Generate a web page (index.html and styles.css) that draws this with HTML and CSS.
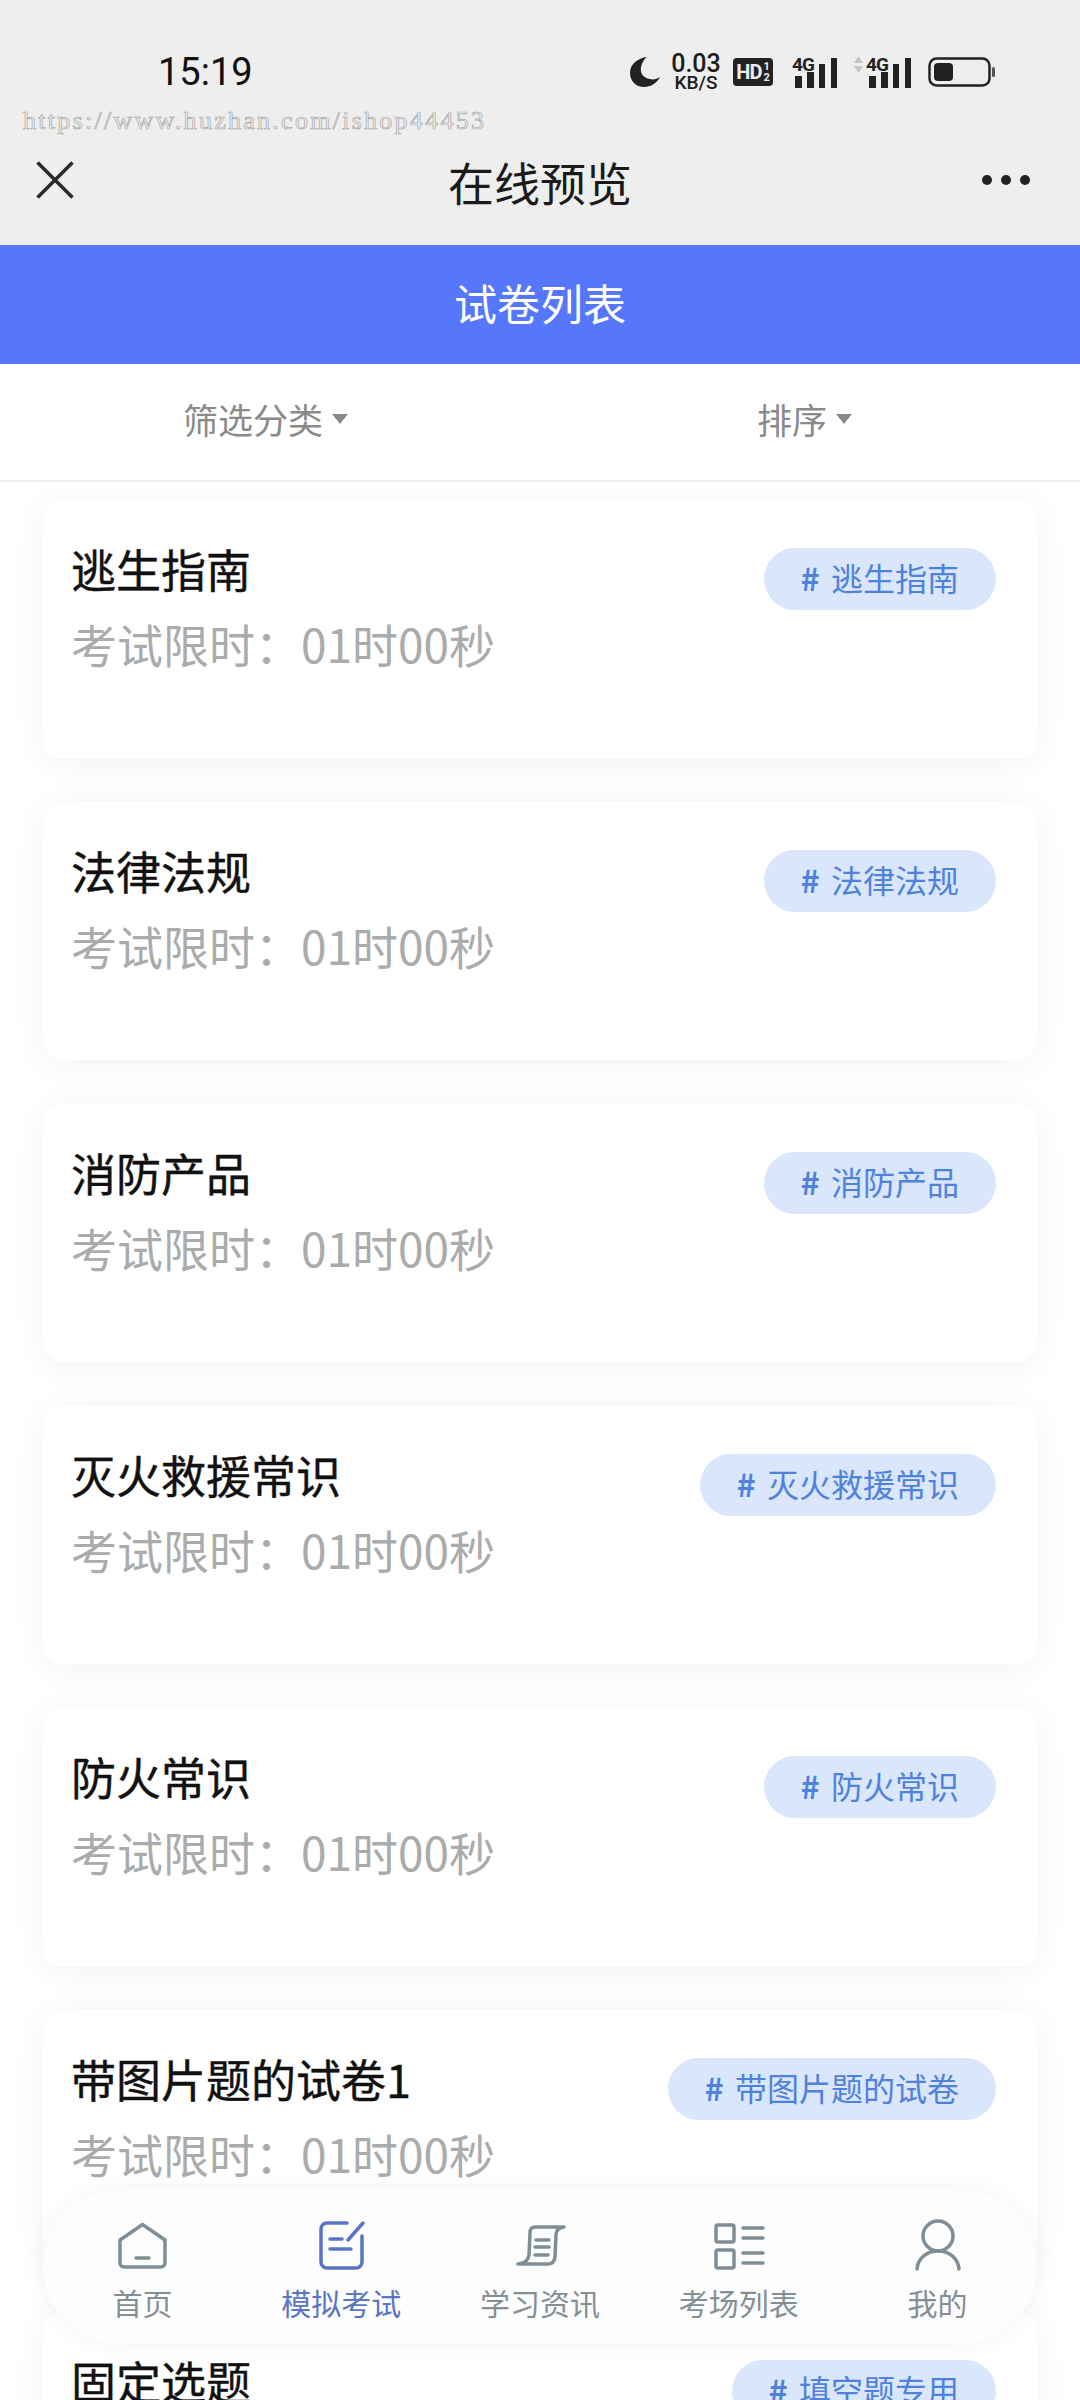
FILE: index.html
```html
<!DOCTYPE html>
<html lang="zh-CN">
<head>
<meta charset="utf-8">
<title>试卷列表</title>
<link rel="stylesheet" href="styles.css">
</head>
<body>
<div class="page">
  <header class="top">
    <div class="status">
      <span class="time">15:19</span>
      <div class="status-icons">
        <svg class="ico-moon" width="30" height="30" viewBox="0 0 30 30"><path d="M17 0C8 1 0 7 0 16c0 8 6 14 14 14 7 0 13-4 16-10-3 2-7 3-10 2C13 21 10 16 11 10c1-4 3-8 6-10Z" fill="#222"/></svg>
        <div class="speed"><span class="speed-num">0.03</span><span class="speed-unit">KB/S</span></div>
        <div class="hd"><span class="hd-main">HD</span><span class="hd-frac"><i>1</i><i>2</i></span></div>
        <svg class="ico-signal" width="45" height="32" viewBox="0 0 45 32"><text x="0" y="15" class="sig-text">4G</text><rect x="3" y="20" width="7" height="12" fill="#222"/><rect x="15" y="16" width="7" height="16" fill="#222"/><rect x="27" y="8" width="6" height="24" fill="#222"/><rect x="39" y="2" width="6" height="30" fill="#222"/></svg>
        <svg class="ico-arrows" width="9" height="18" viewBox="0 0 9 18"><path d="M4.500 0 9 7H0Z M0 10h9l-4.500 7Z" fill="#c4c4c4"/></svg>
        <svg class="ico-signal2" width="45" height="32" viewBox="0 0 45 32"><text x="0" y="15" class="sig-text">4G</text><rect x="3" y="20" width="7" height="12" fill="#222"/><rect x="15" y="16" width="7" height="16" fill="#222"/><rect x="27" y="8" width="6" height="24" fill="#222"/><rect x="39" y="2" width="6" height="30" fill="#222"/></svg>
        <svg class="ico-batt" width="67" height="30" viewBox="0 0 67 30"><rect x="1.500" y="1.500" width="60" height="27" rx="7" fill="none" stroke="#222" stroke-width="2.500"/><rect x="6" y="6" width="19" height="18" rx="4" fill="#222"/><rect x="64" y="10" width="3" height="10" rx="1.500" fill="#555"/></svg>
      </div>
    </div>
    <div class="watermark">https://www.huzhan.com/ishop44453</div>
    <div class="wxbar">
      <svg class="ico-close" width="38" height="38" viewBox="0 0 38 38"><path d="M1.500 1.500 36.500 36.500M36.500 1.500 1.500 36.500" stroke="#2a2a2a" stroke-width="3.500" fill="none"/></svg>
      <span class="wx-title">在线预览</span>
      <span class="dots"><i></i><i></i><i></i></span>
    </div>
  </header>

  <div class="bluebar">试卷列表</div>

  <div class="filters">
    <div class="filter"><span>筛选分类</span><i class="caret"></i></div>
    <div class="filter"><span>排序</span><i class="caret"></i></div>
  </div>

  <main class="list">
    <article class="card"><div class="card-main"><h2 class="card-title">逃生指南</h2><p class="card-sub">考试限时：01时00秒</p></div><span class="tag"># <b>逃生指南</b></span></article>
    <article class="card"><div class="card-main"><h2 class="card-title">法律法规</h2><p class="card-sub">考试限时：01时00秒</p></div><span class="tag"># <b>法律法规</b></span></article>
    <article class="card"><div class="card-main"><h2 class="card-title">消防产品</h2><p class="card-sub">考试限时：01时00秒</p></div><span class="tag"># <b>消防产品</b></span></article>
    <article class="card"><div class="card-main"><h2 class="card-title">灭火救援常识</h2><p class="card-sub">考试限时：01时00秒</p></div><span class="tag"># <b>灭火救援常识</b></span></article>
    <article class="card"><div class="card-main"><h2 class="card-title">防火常识</h2><p class="card-sub">考试限时：01时00秒</p></div><span class="tag"># <b>防火常识</b></span></article>
    <article class="card"><div class="card-main"><h2 class="card-title">带图片题的试卷1</h2><p class="card-sub">考试限时：01时00秒</p></div><span class="tag"># <b>带图片题的试卷</b></span></article>
    <article class="card"><div class="card-main"><h2 class="card-title">固定选题</h2><p class="card-sub">考试限时：01时00秒</p></div><span class="tag"># <b>填空题专用</b></span></article>
  </main>

  <nav class="tabbar">
    <div class="tab">
      <svg width="60" height="60" viewBox="0 0 60 60" class="tab-ico"><path d="M30.500 9.500 53 25V48a4 4 0 0 1-4 4H12a4 4 0 0 1-4-4V25Z"/><path d="M24 43H37"/></svg>
      <span>首页</span>
    </div>
    <div class="tab tab-on">
      <svg width="60" height="60" viewBox="0 0 60 60" class="tab-ico"><path d="M36 8H16a6 6 0 0 0-6 6V47a6 6 0 0 0 6 6H45a6 6 0 0 0 6-6V21"/><path d="M52 8 37 25"/><path d="M19 24H31M19 34H40"/></svg>
      <span>模拟考试</span>
    </div>
    <div class="tab">
      <svg width="60" height="60" viewBox="0 0 60 60" class="tab-ico"><path d="M54 12H25Q20 12 20 18L19 40Q18 48 8 49H38Q44 49 45 42L46 20Q46 13 54 12Z"/><path d="M26 25H39M25 32H39M25 40H38"/></svg>
      <span>学习资讯</span>
    </div>
    <div class="tab">
      <svg width="60" height="60" viewBox="0 0 60 60" class="tab-ico"><rect x="7" y="10" width="18" height="17" rx="2"/><rect x="7" y="35" width="18" height="18" rx="2"/><path d="M34 13H54M34 23H54M34 38H54M34 48H54"/></svg>
      <span>考场列表</span>
    </div>
    <div class="tab">
      <svg width="60" height="60" viewBox="0 0 60 60" class="tab-ico"><circle cx="30" cy="21" r="15"/><path d="M9 54C10 43 19 36 30 36S50 43 51 54"/></svg>
      <span>我的</span>
    </div>
  </nav>
</div>
</body>
</html>
```
FILE: styles.css
```css
* { box-sizing: border-box; }
html, body { margin: 0; padding: 0; }
body { font-family: "Noto Sans CJK SC", "Noto Sans", sans-serif; background: #fff; }
.page { position: relative; width: 1080px; height: 2400px; overflow: hidden; background: #fff; }

.top { position: relative; height: 245px; background: #eeeeee; padding-top: 40px; }
.status { display: flex; align-items: center; height: 64px; padding: 0 85px 0 158px; }
.time { font-family: Roboto, sans-serif; font-size: 38px; color: #111; }
.status-icons { margin-left: auto; display: flex; align-items: center; }
.status-icons svg { display: block; flex: none; overflow: visible; }
.speed { display: flex; flex-direction: column; align-items: center; margin-left: 11px; width: 50px; color: #1c1c1c; font-family: Roboto, sans-serif; font-weight: 500; }
.speed-num { font-size: 25px; line-height: 20px; }
.speed-unit { font-size: 19px; line-height: 16px; margin-top: 1px; }
.hd { display: flex; align-items: center; justify-content: center; width: 40px; height: 28px; margin-left: 12px; background: #222; border-radius: 4px; color: #eee; font-family: "Roboto", sans-serif; font-weight: 700; }
.hd-main { font-size: 20px; letter-spacing: -1px; }
.hd-frac { display: flex; flex-direction: column; margin-left: 2px; }
.hd-frac i { font-style: normal; font-size: 11px; line-height: 11px; }
.sig-text { font-family: Roboto, sans-serif; font-weight: 700; font-size: 19px; fill: #222; letter-spacing: -1px; }
.ico-signal { margin-left: 19px; }
.ico-arrows { margin-left: 17px; margin-top: -14px; }
.ico-signal2 { margin-left: 3px; }
.ico-batt { margin-left: 17px; }

.watermark { position: absolute; left: 23px; top: 105px; font-family: "Liberation Serif", serif; font-size: 26px; line-height: 32px; letter-spacing: 2.270px; color: #eeeeee; -webkit-text-stroke: 0.700px #a8a8a8; white-space: nowrap; }

.wxbar { display: flex; align-items: center; justify-content: space-between; height: 80px; margin-top: 37px; padding: 0 50px 0 36px; position: relative; }
.wx-title { position: absolute; left: 0; right: 0; text-align: center; font-size: 46px; line-height: 76px; color: #1a1a1a; }
.ico-close { display: block; margin-top: -2px; }
.dots { display: flex; gap: 9px; margin-top: -2px; }
.dots i { display: block; width: 10px; height: 10px; border-radius: 50%; background: #222; }

.bluebar { height: 119px; background: #5677fc; color: #fff; font-size: 43px; display: flex; align-items: center; justify-content: center; padding-bottom: 6px; }

.filters { display: flex; height: 118px; background: #fff; border-bottom: 2px solid #eeeeee; position: relative; z-index: 1; }
.filter { flex: 1; display: flex; align-items: center; justify-content: center; gap: 9px; font-size: 35px; color: #8a8a8a; padding-bottom: 8px; }
.filter:first-child { padding-right: 8px; }
.filter:last-child { padding-right: 10px; }
.caret { display: block; width: 0; height: 0; border-left: 8.500px solid transparent; border-right: 8.500px solid transparent; border-top: 10px solid #8a8a8a; margin-top: 2px; }

.list { padding: 18px 43px 0; display: flex; flex-direction: column; gap: 44px; }
.card { flex: none; display: flex; justify-content: space-between; align-items: flex-start; height: 258px; padding: 39px 41px 0 28px; background: #fff; border-radius: 20px; box-shadow: 0 4px 36px rgba(0, 0, 0, 0.055); }
.card-main { min-width: 0; }
.card-title { margin: 0; font-size: 45px; line-height: 60px; font-weight: 400; color: #111; white-space: nowrap; -webkit-text-stroke: 0.400px #111; }
.card-sub { margin: 14px 0 0; font-size: 46px; line-height: 60px; color: #ababab; white-space: nowrap; }
.tag { flex: none; margin-top: 9px; height: 62px; padding: 0 37px; border-radius: 31px; background: #d9e6fc; color: #4f82dc; font-size: 32px; line-height: 59px; white-space: nowrap; font-weight: 700; }
.tag b { font-weight: 400; margin-left: 4px; }

.tabbar { position: absolute; left: 43px; top: 2189px; width: 994px; height: 155px; display: grid; grid-template-columns: repeat(5, 1fr); background: #fdfdfe; border-radius: 78px; box-shadow: 0 0 24px rgba(0, 0, 0, 0.05); }
.tab { display: flex; flex-direction: column; align-items: center; padding-top: 26px; font-size: 30px; line-height: 40px; color: #848f95; }
.tab-ico { display: block; fill: none; stroke: #7f8e96; stroke-width: 3.500; stroke-linecap: round; stroke-linejoin: round; margin-bottom: 7px; }
.tab-on { color: #5a75c4; }
.tab-on .tab-ico { stroke: #5a75c4; }
```
